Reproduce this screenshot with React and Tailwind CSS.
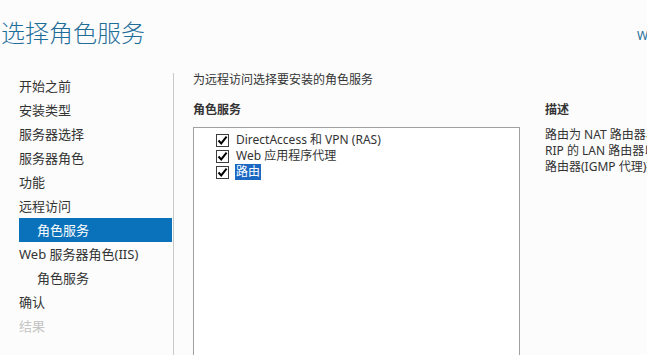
import React from "react";

const font = { fontFamily: '"Noto Sans", "Noto Sans CJK SC", sans-serif' };

function Check() {
  return (
    <span className="w-[13px] h-[13px] shrink-0 border border-[#3c3c3c] bg-white flex items-center justify-center">
      <svg width="11" height="11" viewBox="0 0 11 11">
        <path d="M1.5 5.5 L4.2 8.4 L9.6 1.6" fill="none" stroke="#000" strokeWidth="2" />
      </svg>
    </span>
  );
}

export default function App() {
  const nav = [
    { t: "开始之前" },
    { t: "安装类型" },
    { t: "服务器选择" },
    { t: "服务器角色" },
    { t: "功能" },
    { t: "远程访问" },
    { t: "角色服务", sub: true, sel: true },
    { t: "Web 服务器角色(IIS)" },
    { t: "角色服务", sub: true },
    { t: "确认" },
    { t: "结果", dis: true },
  ];
  return (
    <div
      className="w-[647px] h-[355px] overflow-hidden bg-[#fcfcfc] flex flex-col text-[#333333]"
      style={font}
    >
      <div className="h-[73px] shrink-0 flex items-start">
        <div className="w-[637px] shrink-0 pl-[1px] pt-[17px]">
          <span className="text-[24px] leading-[32px] font-light text-[#1f6e99]">选择角色服务</span>
        </div>
        <div className="shrink-0 pt-[28px] text-[12px] leading-[16px] text-[#1f6e99] whitespace-nowrap">
          WIN-SERVER2016
        </div>
      </div>
      <div className="flex flex-1 min-h-0">
        <div className="w-[174px] shrink-0 border-r border-[#c8c8c8] pl-[19px] pt-[1px]">
          {nav.map((n, i) => (
            <div
              key={i}
              className={
                "w-[153px] h-[24px] leading-[24px] text-[13px] whitespace-nowrap " +
                (n.sub ? "pl-[18px] " : "") +
                (n.sel ? "bg-[#0a72ba] text-white " : n.dis ? "text-[#c4c4c4] " : "text-[#333333] ")
              }
            >
              {n.t}
            </div>
          ))}
        </div>
        <div className="flex-1 min-w-0 pl-[19px] flex flex-col">
          <div className="text-[12px] leading-[14px] whitespace-nowrap">为远程访问选择要安装的角色服务</div>
          <div className="flex flex-1 min-h-0 mt-[15px]">
            <div className="w-[327px] shrink-0 flex flex-col">
              <div className="text-[12px] leading-[16px] font-bold">角色服务</div>
              <div className="mt-[9px] flex-1 bg-white border-t border-l border-r border-[#a0a0a0] pt-[4px] pl-[22px] text-[12px]">
                <div className="h-[16px] flex items-center">
                  <Check />
                  <span className="ml-[7px] leading-[16px] whitespace-nowrap">DirectAccess 和 VPN (RAS)</span>
                </div>
                <div className="h-[16px] flex items-center">
                  <Check />
                  <span className="ml-[7px] leading-[16px] whitespace-nowrap">Web 应用程序代理</span>
                </div>
                <div className="h-[16px] flex items-center">
                  <Check />
                  <span className="ml-[6px] px-[1px] leading-[16px] bg-[#1c69c4] text-white whitespace-nowrap">路由</span>
                </div>
              </div>
            </div>
            <div className="ml-[25px] shrink-0 flex flex-col">
              <div className="text-[12px] leading-[16px] font-bold">描述</div>
              <div className="mt-[9px] text-[12px] leading-[16px] whitespace-nowrap">
                <div>路由为 NAT 路由器、具有 BGP 的 LAN 路由器、</div>
                <div>RIP 的 LAN 路由器以及支持多播的</div>
                <div>路由器(IGMP 代理)提供支持。</div>
              </div>
            </div>
          </div>
        </div>
      </div>
    </div>
  );
}
